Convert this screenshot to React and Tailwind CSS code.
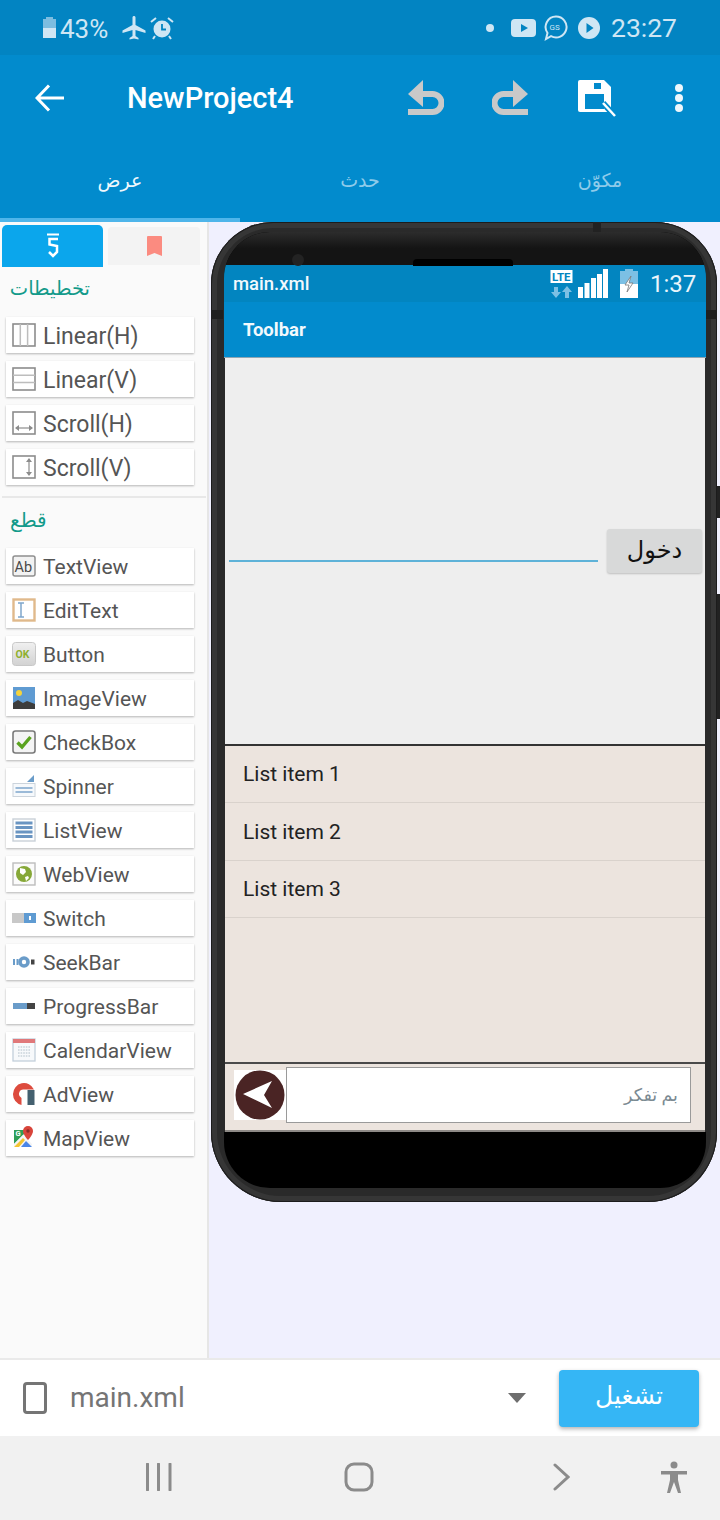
import React from "react";

const Box = ({ children, w = 24, h = 24, vb, className = "" }) => (
  <svg width={w} height={h} viewBox={vb || `0 0 ${w} ${h}`} className={`shrink-0 ${className}`}>
    {children}
  </svg>
);

const IconLinearH = () => (
  <Box>
    <rect x="1" y="1" width="22" height="22" fill="#fff" stroke="#8c8c8c" strokeWidth="1.6" />
    <path d="M8.3 1v22M15.6 1v22" stroke="#bdbdbd" strokeWidth="1.5" />
  </Box>
);
const IconLinearV = () => (
  <Box>
    <rect x="1" y="1" width="22" height="22" fill="#fff" stroke="#8c8c8c" strokeWidth="1.6" />
    <path d="M1 8.3h22M1 15.6h22" stroke="#bdbdbd" strokeWidth="1.5" />
  </Box>
);
const IconScrollH = () => (
  <Box>
    <rect x="1" y="1" width="22" height="22" fill="#fff" stroke="#8c8c8c" strokeWidth="1.6" />
    <path d="M4 17h16" stroke="#8c8c8c" strokeWidth="1.2" />
    <path d="M3 17l4-3v6zM21 17l-4-3v6z" fill="#8c8c8c" />
  </Box>
);
const IconScrollV = () => (
  <Box>
    <rect x="1" y="1" width="22" height="22" fill="#fff" stroke="#8c8c8c" strokeWidth="1.6" />
    <path d="M17 4v16" stroke="#8c8c8c" strokeWidth="1.2" />
    <path d="M17 3l-3 4h6zM17 21l-3-4h6z" fill="#8c8c8c" />
  </Box>
);
const IconTextView = () => (
  <Box>
    <rect x="1" y="2" width="22" height="20" rx="2" fill="#f2f2f2" stroke="#8f8f8f" strokeWidth="1.5" />
    <text x="2.5" y="17.5" fontSize="14.500" fontFamily="Roboto" fill="#4a4a4a">Ab</text>
  </Box>
);
const IconEditText = () => (
  <Box>
    <rect x="1.5" y="1.5" width="21" height="21" fill="#fff" stroke="#e0b98b" strokeWidth="2.4" />
    <path d="M6 5h6M6 19h6M9 5v14" stroke="#7fa6cc" strokeWidth="1.5" fill="none" />
  </Box>
);
const IconButton = () => (
  <Box>
    <defs>
      <linearGradient id="okg" x1="0" y1="0" x2="0" y2="1">
        <stop offset="0" stopColor="#f0f0f0" />
        <stop offset="1" stopColor="#d2d2d2" />
      </linearGradient>
    </defs>
    <rect x="0.5" y="0.5" width="23" height="23" rx="3" fill="url(#okg)" stroke="#c8c8c8" />
    <text x="3.500" y="16" fontSize="10.5" fontWeight="700" fontFamily="Roboto" fill="#8fb02f">OK</text>
  </Box>
);
const IconImageView = () => (
  <Box>
    <rect x="1" y="1" width="22" height="22" fill="#5f9bd2" />
    <circle cx="7" cy="7" r="3" fill="#f5d33c" />
    <path d="M1 23v-6l5-3 5 3 4-2 8 3v5z" fill="#3d3d3d" />
  </Box>
);
const IconCheckBox = () => (
  <Box>
    <rect x="1" y="1" width="22" height="22" rx="2.5" fill="#f4f4f4" stroke="#7a7a7a" strokeWidth="1.6" />
    <path d="M5.5 12.5l4.5 4.5 8.5-10" fill="none" stroke="#5aa31f" strokeWidth="3.4" />
  </Box>
);
const IconSpinner = () => (
  <Box>
    <path d="M22 1v7h-7z" fill="#6a9cc9" />
    <rect x="1" y="9.5" width="22" height="13" fill="#f6f9fc" stroke="#ccd4dc" />
    <path d="M3.5 14h17M3.5 18h17" stroke="#7ea5cb" strokeWidth="1.4" />
  </Box>
);
const IconListView = () => (
  <Box>
    <rect x="1" y="1" width="22" height="22" fill="#fff" stroke="#c9d0d8" strokeWidth="1.4" />
    <path d="M3.5 5h17M3.5 9.5h17M3.5 14h17M3.5 18.5h17" stroke="#6a95c2" strokeWidth="3" />
  </Box>
);
const IconWebView = () => (
  <Box>
    <rect x="1" y="1" width="22" height="22" fill="#fbfbfb" stroke="#bdbdbd" strokeWidth="1.4" />
    <circle cx="12" cy="12" r="8" fill="#86a838" />
    <path d="M8 6l5 1 1 3-3 3-3-2zM13 15l3-1 1 2-3 3z" fill="#fff" />
  </Box>
);
const IconSwitch = () => (
  <Box>
    <rect x="0" y="7" width="12" height="10" fill="#c8c8c8" />
    <rect x="12" y="7" width="12" height="10" fill="#5f9bd2" />
    <rect x="17" y="10" width="2" height="4" fill="#fff" />
  </Box>
);
const IconSeekBar = () => (
  <Box>
    <rect x="1" y="9" width="2" height="6" fill="#6a9cc9" />
    <rect x="4.5" y="9" width="2" height="6" fill="#6a9cc9" />
    <circle cx="12" cy="12" r="4" fill="none" stroke="#6a9cc9" strokeWidth="3.6" />
    <rect x="19" y="9.5" width="3.5" height="5" fill="#444" />
  </Box>
);
const IconProgress = () => (
  <Box>
    <rect x="1" y="9" width="14" height="6" fill="#6a9cc9" />
    <rect x="15" y="9" width="8" height="6" fill="#444" />
  </Box>
);
const IconCalendar = () => (
  <Box>
    <rect x="1" y="1" width="22" height="22" fill="#f7f9fb" stroke="#c3cfdb" strokeWidth="1.3" />
    <rect x="1" y="1" width="22" height="4" fill="#e0787a" />
    <path d="M6 9h12M6 12h12M6 15h12M6 18h12" stroke="#c9d2da" strokeWidth="1.6" strokeDasharray="1.6 1" />
  </Box>
);
const IconAdView = () => (
  <Box>
    <path d="M1 12a11 11 0 0 1 21-4.5H12A4.5 4.5 0 0 0 9.5 16v7A11 11 0 0 1 1 12z" fill="#dd4b3e" />
    <rect x="15.5" y="8" width="7" height="15" fill="#44606f" />
  </Box>
);
const IconMapView = () => (
  <Box>
    <path d="M2 4h14l-14 14z" fill="#2f9e56" />
    <path d="M2 18l9-9 9 9v2H2z" fill="#f4f4f4" />
    <path d="M2 21l9-9 2 2-6 7z" fill="#f4c430" />
    <path d="M9 21l5-6 6 6z" fill="#4a86e8" />
    <path d="M16 0a5 5 0 0 1 5 5c0 4-5 9-5 9s-5-5-5-9a5 5 0 0 1 5-5z" fill="#d8443a" />
    <circle cx="16" cy="5" r="1.7" fill="#8c2a24" />
    <text x="3.5" y="10" fontSize="7.5" fontWeight="700" fontFamily="Roboto" fill="#fff">G</text>
  </Box>
);

const layouts = [
  ["Linear(H)", IconLinearH],
  ["Linear(V)", IconLinearV],
  ["Scroll(H)", IconScrollH],
  ["Scroll(V)", IconScrollV],
];
const widgets = [
  ["TextView", IconTextView],
  ["EditText", IconEditText],
  ["Button", IconButton],
  ["ImageView", IconImageView],
  ["CheckBox", IconCheckBox],
  ["Spinner", IconSpinner],
  ["ListView", IconListView],
  ["WebView", IconWebView],
  ["Switch", IconSwitch],
  ["SeekBar", IconSeekBar],
  ["ProgressBar", IconProgress],
  ["CalendarView", IconCalendar],
  ["AdView", IconAdView],
  ["MapView", IconMapView],
];

function PaletteItem({ label, Icon, big }) {
  return (
    <div className="flex h-[36px] w-[188px] items-center gap-[7px] bg-white pl-[6px] shadow-[0_1px_2px_rgba(0,0,0,0.28)]">
      <Icon />
      <span className={`${big ? "pt-[2px] text-[23px]" : "pt-[3px] text-[21px]"} leading-none text-[#555555]`}>{label}</span>
    </div>
  );
}

function StatusBar() {
  const c = "#cfe6f4";
  return (
    <div className="flex h-[55px] items-center bg-[#0284c2] pl-[42px] text-[#cfe6f4]">
      <svg width="15" height="21" viewBox="0 0 15 21" className="shrink-0">
        <path d="M4 0h7v2h3v19H1V2h3z" fill="#7cbde0" />
        <rect x="1" y="11" width="13" height="10" fill={c} />
      </svg>
      <span className="ml-[3px] w-[49px] pt-[2px] text-[26px] leading-none">43%</span>
      <svg width="24" height="24" viewBox="0 0 24 24" className="ml-[13px] shrink-0">
        <path d="M10.5 1.5c0-2 3-2 3 0V9l10 5.5V17l-10-3v6l3 2v1.5l-4.500-1-4.500 1V22l3-2v-6l-10 3v-2.500L10.500 9z" fill={c} />
      </svg>
      <svg width="24" height="24" viewBox="0 0 24 24" className="ml-[4px] shrink-0">
        <circle cx="12" cy="13" r="8.500" fill={c} />
        <path d="M12 8v5.500h4" stroke="#0284c2" strokeWidth="1.800" fill="none" />
        <path d="M1 6l5-4M23 6l-5-4M5 20l-2 3M19 20l2 3" stroke={c} strokeWidth="2" />
      </svg>
      <span className="ml-[312px] h-[8px] w-[8px] rounded-full bg-[#cfe6f4]" />
      <svg width="25" height="18" viewBox="0 0 25 18" className="ml-[17px] shrink-0">
        <rect width="25" height="18" rx="4" fill={c} />
        <path d="M10 5l7 4-7 4z" fill="#0284c2" />
      </svg>
      <svg width="24" height="26" viewBox="0 0 24 26" className="ml-[8px] shrink-0">
        <path d="M12 1.500a10.500 10.500 0 1 1-5 19.700L2 24l1.500-6A10.500 10.500 0 0 1 12 1.500z" fill="none" stroke={c} strokeWidth="2" />
        <text x="5.500" y="15" fontSize="8" fontFamily="Roboto" fill={c}>GS</text>
      </svg>
      <svg width="22" height="22" viewBox="0 0 22 22" className="ml-[10px] shrink-0">
        <circle cx="11" cy="11" r="11" fill={c} />
        <path d="M8.500 6l7 5-7 5z" fill="#0284c2" />
      </svg>
      <span className="ml-[11px] pt-[2px] text-[26.500px] leading-none">23:27</span>
    </div>
  );
}

function AppBar() {
  return (
    <div className="flex h-[85px] items-center bg-[#028bcd] pl-[35px]">
      <svg width="29" height="28" viewBox="0 0 29 28" className="shrink-0">
        <path d="M14 1.500L2 14l12 12.500M2 14h27" fill="none" stroke="#fff" strokeWidth="3" />
      </svg>
      <span className="ml-[63px] w-[167px] pt-[2px] text-[29px] font-medium leading-none whitespace-nowrap text-white">NewProject4</span>
      <svg width="36" height="35" viewBox="0 0 36 35" className="ml-[114px] shrink-0">
        <path d="M0 14L15 0v27z" fill="#c9c9c9" />
        <path d="M10 14h14.500a9 9 0 0 1 0 18H0" fill="none" stroke="#c9c9c9" strokeWidth="6" />
      </svg>
      <svg width="36" height="35" viewBox="0 0 36 35" className="ml-[48px] shrink-0 -scale-x-100">
        <path d="M0 14L15 0v27z" fill="#c9c9c9" />
        <path d="M10 14h14.500a9 9 0 0 1 0 18H0" fill="none" stroke="#c9c9c9" strokeWidth="6" />
      </svg>
      <svg width="38" height="38" viewBox="0 0 38 38" className="ml-[50px] shrink-0">
        <path d="M2 1h24l7 7v24a1 1 0 0 1-1 1H2a2 2 0 0 1-2-2V3a2 2 0 0 1 2-2z" fill="#fff" />
        <rect x="16" y="4" width="7" height="6" fill="#028bcd" />
        <rect x="7" y="15" width="19" height="15" fill="#028bcd" />
        <path d="M25 24l12 13" stroke="#028bcd" strokeWidth="6" />
        <path d="M25 24l12 13" stroke="#fff" strokeWidth="2.500" />
      </svg>
      <div className="ml-[59px] flex w-[8px] flex-col gap-[2px]">
        <span className="h-[8px] w-[8px] rounded-full bg-[#eef7fc]" />
        <span className="h-[8px] w-[8px] rounded-full bg-[#eef7fc]" />
        <span className="h-[8px] w-[8px] rounded-full bg-[#eef7fc]" />
      </div>
    </div>
  );
}

function Tabs() {
  return (
    <div className="flex h-[82px] bg-[#028bcd]">
      {[
        ["عرض", "border-[#4eb5ea] text-[#f0f8fd]"],
        ["حدث", "border-transparent text-[#8fcbea]"],
        ["مكوّن", "border-transparent text-[#8fcbea]"],
      ].map(([t, cls]) => (
        <div key={t} dir="rtl" className={`flex w-[240px] items-center justify-center border-b-[4px] pt-[4px] text-[19px] ${cls}`}>
          {t}
        </div>
      ))}
    </div>
  );
}

function Sidebar() {
  return (
    <aside className="flex w-[209px] shrink-0 flex-col border-r-2 border-[#e6e6e6] bg-[#fafafa]">
      <div className="flex h-[45px] items-stretch pl-[2px]">
        <div className="mt-[3px] flex h-[42px] w-[101px] items-center justify-center rounded-t-[5px] bg-[#0ba6ec]">
          <svg width="14" height="26" viewBox="0 0 14 26">
            <path d="M1 1.500h12" stroke="#fff" strokeWidth="2" />
            <path d="M12 6H3.500v5.500L11 13v6l-4 4-4-4" fill="none" stroke="#fff" strokeWidth="2.500" />
          </svg>
        </div>
        <div className="ml-[5px] mt-[5px] flex h-[38px] w-[92px] items-center justify-center rounded-t-[4px] bg-[#f3f3f3]">
          <svg width="15" height="20" viewBox="0 0 15 20">
            <path d="M0 1a1 1 0 0 1 1-1h13a1 1 0 0 1 1 1v19l-7.500-3L0 20z" fill="#fb8b80" />
          </svg>
        </div>
      </div>
      <div dir="rtl" className="flex h-[50px] w-[90px] items-center pb-[7px] text-[19.500px] text-[#139a8a]">تخطيطات</div>
      <div className="flex flex-col gap-[8px] pl-[6px]">
        {layouts.map(([l, I]) => (
          <PaletteItem key={l} label={l} Icon={I} big />
        ))}
      </div>
      <div className="ml-[2px] mr-[1px] mt-[11px] h-[2px] bg-[#e8e8e8]" />
      <div className="flex h-[50px] items-center pb-[7px] pl-[10px] text-[20px] text-[#139a8a]">قطع</div>
      <div className="flex flex-col gap-[8px] pl-[6px]">
        {widgets.map(([l, I]) => (
          <PaletteItem key={l} label={l} Icon={I} />
        ))}
      </div>
    </aside>
  );
}

function PhoneStatus() {
  return (
    <div className="flex h-[37px] items-center bg-[#0285c0] pl-[9px]">
      <span className="w-[317px] pt-[2px] text-[18.500px] font-medium leading-none text-[#f2f9fd]">main.xml</span>
      <svg width="23" height="30" viewBox="0 0 23 30" className="shrink-0">
        <rect x="0.500" y="1" width="22" height="13" fill="#fff" />
        <text x="2" y="12" fontSize="11.500" fontWeight="700" fontFamily="Roboto" fill="#0285c0">LTE</text>
        <path d="M6 29l-5-6h3v-5h4v5h3z" fill="#7cc0e4" />
        <path d="M17 17l5 6h-3v6h-4v-6h-3z" fill="#7cc0e4" />
      </svg>
      <svg width="30" height="29" viewBox="0 0 30 29" className="ml-[5px] shrink-0">
        <path d="M0 18h5v11H0zM6.500 14h5v15h-5zM13 9h5v20h-5zM19 5h5v24h-5zM25 0h5v29h-5z" fill="#fff" />
      </svg>
      <svg width="18" height="29" viewBox="0 0 18 29" className="ml-[12px] shrink-0">
        <path d="M5 0h8v2h5v27H0V2h5z" fill="#7cc0e4" />
        <rect y="15" width="18" height="14" fill="#fff" />
        <path d="M11 7l-6 9h4l-2 7 6-9H9z" fill="#fff" stroke="#777" strokeWidth="0.800" />
      </svg>
      <span className="ml-[12px] text-[24px] leading-none text-[#eaf5fb]">1:37</span>
    </div>
  );
}

function PhoneScreen() {
  return (
    <div className="flex h-[867px] flex-col bg-[#2a2a2a]">
      <PhoneStatus />
      <div className="flex h-[56px] items-center border-b border-[#8fa5b2] bg-[#028bcd] pl-[19px] pt-[3px] text-[18.500px] font-bold text-[#f2f9fd]">
        Toolbar
      </div>
      <div className="mx-[1px] flex h-[388px] items-end border-b-2 border-[#333333] bg-[#eeeeee] pb-[171px] pl-[4px]">
        <div className="mb-[11px] h-[2px] w-[369px] bg-[#5eb2d8]" />
        <div className="ml-[9px] flex h-[44px] w-[95px] items-center justify-center rounded-[3px] bg-[#d8d9d9] pb-[3px] text-[24px] text-[#111111] shadow-[0_1px_2px_rgba(0,0,0,0.2)]">
          دخول
        </div>
      </div>
      <div className="mx-[1px] flex h-[318px] flex-col border-b-2 border-[#4a4a4a] bg-[#ece4de]">
        {["List item 1", "List item 2", "List item 3"].map((t) => (
          <div key={t} className="flex h-[57.300px] items-center border-b border-[#d9d2cc] pl-[18px] pt-[2px] text-[21px] text-[#222222]">
            {t}
          </div>
        ))}
      </div>
      <div className="mx-[1px] flex flex-1 items-start border-b-2 border-[#8e8a86] bg-[#ece4de] pl-[9px] pt-[3px]">
        <div className="mt-[3px] flex h-[50px] w-[52px] items-center justify-center bg-white">
          <svg width="50" height="50" viewBox="0 0 50 50">
            <circle cx="25" cy="25" r="24.500" fill="#4a2424" />
            <path d="M8 24L37 11 29 25 37 38z" fill="#fff" />
          </svg>
        </div>
        <div dir="rtl" className="mr-[14px] flex h-[56px] flex-1 items-center border border-[#9a9a9a] bg-white pr-[12px] text-[17.500px] text-[#7b8a92]">
          بم تفكر
        </div>
      </div>
    </div>
  );
}

function Phone() {
  return (
    <div className="relative ml-[2px] h-[980px] w-[506px] rounded-t-[62px] rounded-b-[70px] bg-[#2a2a2a] pb-[14px] pl-[13px] pr-[11px] pt-[10px] shadow-[inset_0_0_0_1px_#1c1c1c,inset_0_0_0_6px_#363636]">
      <div className="flex h-full flex-col overflow-hidden rounded-t-[46px] rounded-b-[46px] bg-black">
        <div className="h-[33px] bg-gradient-to-b from-[#2c2c2c] to-[#141414] to-50%" />
        <PhoneScreen />
      </div>
      <span className="absolute left-[202px] top-[37px] h-[7px] w-[100px] rounded-t-[4px] bg-black" />
      <span className="absolute left-[81px] top-[32px] h-[12px] w-[12px] rounded-full bg-[#232323]" />
      <span className="absolute left-[382px] top-0 h-[10px] w-[8px] bg-[#222222]" />
      <span className="absolute left-0 top-[88px] h-[9px] w-[12px] bg-[#1f1f1f]" />
      <span className="absolute right-0 top-[88px] h-[9px] w-[11px] bg-[#1f1f1f]" />
      <span className="absolute -right-[3px] top-[264px] h-[32px] w-[3px] bg-[#222222]" />
      <span className="absolute -right-[3px] top-[372px] h-[125px] w-[3px] bg-[#222222]" />
    </div>
  );
}

function BottomBar() {
  return (
    <div className="flex h-[78px] items-center border-t-2 border-[#eaeaea] bg-white pl-[23px]">
      <svg width="24" height="32" viewBox="0 0 24 32" className="shrink-0">
        <rect x="1.500" y="1.500" width="21" height="29" rx="2.500" fill="none" stroke="#757575" strokeWidth="3" />
      </svg>
      <span className="ml-[23px] w-[438px] text-[28px] leading-none text-[#757575]">main.xml</span>
      <svg width="18" height="10" viewBox="0 0 18 10" className="shrink-0">
        <path d="M0 0h18l-9 10z" fill="#6e6e6e" />
      </svg>
      <div className="ml-[33px] flex h-[57px] w-[140px] items-center justify-center rounded-[4px] bg-[#35b6f5] pb-[4px] text-[25px] text-white shadow-[0_2px_4px_rgba(0,0,0,0.3)]">
        تشغيل
      </div>
    </div>
  );
}

function NavBar() {
  const c = "#8b8b8b";
  return (
    <div className="flex h-[84px] items-center bg-[#f1f1f1] pb-[3px] pl-[145px]">
      <svg width="28" height="28" viewBox="0 0 28 28" className="shrink-0">
        <path d="M2.500 1v26M13.500 1v26M25 1v26" stroke={c} strokeWidth="3" strokeLinecap="round" />
      </svg>
      <svg width="30" height="30" viewBox="0 0 30 30" className="ml-[171px] shrink-0">
        <rect x="2" y="2" width="26" height="26" rx="8" fill="none" stroke={c} strokeWidth="3" />
      </svg>
      <svg width="17" height="28" viewBox="0 0 17 28" className="ml-[179px] shrink-0">
        <path d="M2 2l13 12L2 26" fill="none" stroke={c} strokeWidth="3" strokeLinecap="round" />
      </svg>
      <svg width="28" height="32" viewBox="0 0 28 32" className="ml-[90px] shrink-0">
        <circle cx="14" cy="4" r="3.500" fill={c} />
        <path d="M1 10h26v3.500h-9V19l3 13h-3l-4-11-4 11H7l3-13v-5.500H1z" fill={c} />
      </svg>
    </div>
  );
}

export default function App() {
  return (
    <div className="flex h-[1520px] w-[720px] flex-col overflow-hidden font-[Roboto,'DejaVu_Sans',sans-serif]">
      <StatusBar />
      <AppBar />
      <Tabs />
      <main className="flex h-[1136px] shrink-0">
        <Sidebar />
        <div className="flex-1 bg-[#f0f0fe]">
          <Phone />
        </div>
      </main>
      <BottomBar />
      <NavBar />
    </div>
  );
}
